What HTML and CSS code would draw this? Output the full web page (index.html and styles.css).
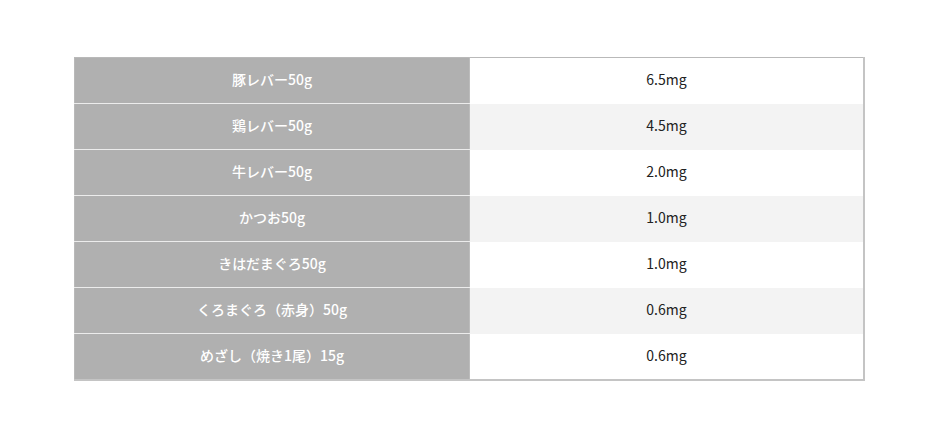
FILE: index.html
```html
<!DOCTYPE html>
<html lang="ja">
<head>
<meta charset="utf-8">
<link rel="stylesheet" href="styles.css">
</head>
<body>
<div class="wrap">
<table class="iron">
<tbody>
<tr><th>豚レバー50g</th><td>6.5mg</td></tr>
<tr><th>鶏レバー50g</th><td>4.5mg</td></tr>
<tr><th>牛レバー50g</th><td>2.0mg</td></tr>
<tr><th>かつお50g</th><td>1.0mg</td></tr>
<tr><th>きはだまぐろ50g</th><td>1.0mg</td></tr>
<tr><th>くろまぐろ（赤身）50g</th><td>0.6mg</td></tr>
<tr><th>めざし（焼き1尾）15g</th><td>0.6mg</td></tr>
</tbody>
</table>
</div>
</body>
</html>
```

FILE: styles.css
```css
html, body {
  margin: 0;
  padding: 0;
  background: #fff;
}
.wrap {
  padding: 57px 75px 0 74px;
}
.iron {
  width: 791px;
  border-collapse: collapse;
  border: 1px solid #b9b9b9;
  border-right: 2px solid #c4c4c4;
  border-bottom: 2px solid #c4c4c4;
  font-family: "Noto Sans CJK JP", "Noto Sans", sans-serif;
  font-size: 14px;
  table-layout: fixed;
}
.iron th,
.iron td {
  height: 41px;
  padding: 0 0 4px;
  text-align: center;
  vertical-align: middle;
}
.iron th {
  width: 394px;
  font-weight: 500;
  background: #b0b0b0;
  color: #fff;
  border-bottom: 1px solid #ececec;
  border-right: 1px solid #bcbcbc;
}
.iron tr:last-child th {
  border-bottom: none;
}
.iron td {
  font-weight: 400;
  color: #222;
  background: #fff;
  border-bottom: 1px solid transparent;
}
.iron tr:nth-child(even) td {
  background: #f3f3f3;
}
```
